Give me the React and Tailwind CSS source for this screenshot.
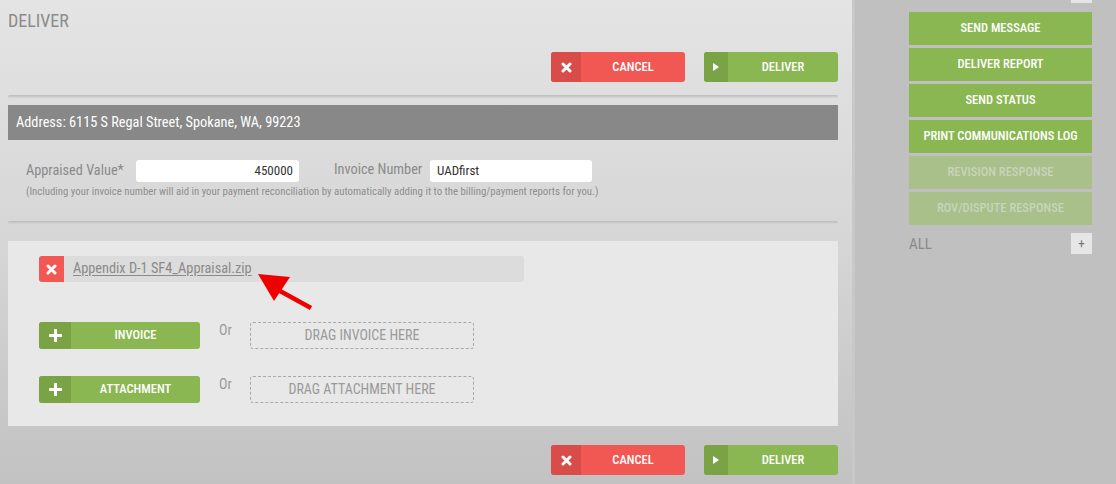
import React from 'react';

const font = { fontFamily: '"Roboto Condensed", "Liberation Sans Narrow", "DejaVu Sans Condensed", Roboto, sans-serif' };

const XIcon = () => (
  <svg width="11" height="11" viewBox="0 0 11 11">
    <path d="M2 2 L9 9 M9 2 L2 9" stroke="#fff" strokeWidth="3" strokeLinecap="round" />
  </svg>
);

const PlayIcon = () => (
  <svg width="6" height="8" viewBox="0 0 6 8">
    <path d="M0 0 L6 4 L0 8 Z" fill="#fff" />
  </svg>
);

const PlusIcon = () => (
  <svg width="13" height="13" viewBox="0 0 13 13">
    <path d="M6.5 1 V12 M1 6.5 H12" stroke="#fff" strokeWidth="3" strokeLinecap="round" />
  </svg>
);

const CancelBtn = () => (
  <div className="flex w-[134px] h-[30px] rounded-[3px] overflow-hidden bg-[#f15753]">
    <div className="w-[30px] flex items-center justify-center bg-[#d84c49]">
      <XIcon />
    </div>
    <div className="flex-1 flex items-center justify-center text-white text-[12.5px] font-medium">CANCEL</div>
  </div>
);

const DeliverBtn = () => (
  <div className="flex w-[134px] h-[30px] rounded-[3px] overflow-hidden bg-[#8ab752]">
    <div className="w-[24px] flex items-center justify-center bg-[#7aa346]">
      <PlayIcon />
    </div>
    <div className="flex-1 flex items-center justify-center text-white text-[12.5px] font-medium">DELIVER</div>
  </div>
);

const AddBtn = ({ label }) => (
  <div className="flex w-[161px] h-[27px] rounded-[3px] overflow-hidden bg-[#8ab752]">
    <div className="w-[32px] flex items-center justify-center bg-[#7aa346]">
      <PlusIcon />
    </div>
    <div className="flex-1 flex items-center justify-center text-white text-[12.5px] font-medium">{label}</div>
  </div>
);

const Separator = () => (
  <div className="h-[3px] rounded-full bg-gradient-to-b from-[#b4b4b4] to-[#d6d6d6] opacity-80" />
);

const sideItems = [
  { label: 'SEND MESSAGE', on: true },
  { label: 'DELIVER REPORT', on: true },
  { label: 'SEND STATUS', on: true },
  { label: 'PRINT COMMUNICATIONS LOG', on: true },
  { label: 'REVISION RESPONSE', on: false },
  { label: 'ROV/DISPUTE RESPONSE', on: false },
];

export default function App() {
  return (
    <div className="relative flex w-[1116px] h-[484px] overflow-hidden bg-[#c0c0c0]" style={font}>
      <main className="w-[855px] shrink-0 pl-2 pr-[14px] pt-[10px] bg-gradient-to-b from-[#e4e4e4] via-[#d6d6d6] to-[#c2c2c2] border-r-[3px] border-[#c8c8c8]">
        <h1 className="text-[18px] leading-[22px] text-[#8b8b8b]">DELIVER</h1>

        <div className="flex justify-end gap-[19px] mt-[20px]">
          <CancelBtn />
          <DeliverBtn />
        </div>

        <div className="mt-[13px]">
          <Separator />
        </div>

        <div className="mt-[7px] h-[35px] bg-[#888888] flex items-center pl-2 text-white text-[14.3px]">
          Address: 6115 S Regal Street, Spokane, WA, 99223
        </div>

        <div className="pl-[18px] mt-[20px] flex items-center">
          <span className="text-[14.3px] text-[#8a8a8a] w-[110px]">Appraised Value*</span>
          <div className="w-[163px] h-[22px] bg-white rounded-[3px] flex items-center justify-end pr-[6px] text-[13px] text-[#333]">450000</div>
          <span className="text-[14.3px] text-[#8a8a8a] ml-[35px] w-[96px] -mt-[2px]">Invoice Number</span>
          <div className="w-[162px] h-[22px] bg-white rounded-[3px] flex items-center pl-[7px] text-[13px] text-[#333]">UADfirst</div>
        </div>
        <p className="pl-[18px] mt-[3px] text-[10.8px] leading-[14px] text-[#8e8e8e]">
          (Including your invoice number will aid in your payment reconciliation by automatically adding it to the billing/payment reports for you.)
        </p>

        <div className="mt-[22px]">
          <Separator />
        </div>

        <div className="mt-[17px] h-[185px] bg-[#e8e8e8] pl-[31px] pt-[15px]">
          <div className="flex items-center w-[485px] h-[26px] rounded-[3px] bg-[#dcdcdc] overflow-hidden">
            <div className="w-[25px] h-full flex items-center justify-center bg-[#f15753]">
              <XIcon />
            </div>
            <span className="ml-[9px] text-[14.3px] text-[#8a8a8a] underline underline-offset-2">Appendix D-1 SF4_Appraisal.zip</span>
          </div>

          <div className="flex items-center mt-[40px]">
            <AddBtn label="INVOICE" />
            <span className="ml-[19px] w-[31px] text-[14px] text-[#9a9a9a] -mt-[10px]">Or</span>
            <div className="w-[224px] h-[27px] rounded-[3px] border border-dashed border-[#a8a8a8] flex items-center justify-center text-[14px] text-[#9a9a9a]">DRAG INVOICE HERE</div>
          </div>

          <div className="flex items-center mt-[27px]">
            <AddBtn label="ATTACHMENT" />
            <span className="ml-[19px] w-[31px] text-[14px] text-[#9a9a9a] -mt-[10px]">Or</span>
            <div className="w-[224px] h-[27px] rounded-[3px] border border-dashed border-[#a8a8a8] flex items-center justify-center text-[14px] text-[#9a9a9a]">DRAG ATTACHMENT HERE</div>
          </div>
        </div>

        <div className="flex justify-end gap-[19px] mt-[19px]">
          <CancelBtn />
          <DeliverBtn />
        </div>
      </main>

      <aside className="flex-1 pl-[54px] pr-[24px]">
        <div className="flex justify-end">
          <div className="w-[21px] h-[3px] bg-[#e6e6e6]" />
        </div>
        <div className="flex flex-col gap-[3px] mt-[9px]">
          {sideItems.map((it) => (
            <div
              key={it.label}
              className={
                it.on
                  ? 'h-[33px] flex items-center justify-center bg-[#8ab752] text-white text-[12.5px] font-medium'
                  : 'h-[33px] flex items-center justify-center bg-[#a9c08b] text-[#c8d4ba] text-[12.5px] font-medium'
              }
            >
              {it.label}
            </div>
          ))}
        </div>
        <div className="flex items-center justify-between mt-[7px]">
          <span className="text-[15px] text-[#8a8a8a] mt-[1px]">ALL</span>
          <div className="w-[21px] h-[21px] bg-[#e6e6e6] flex items-center justify-center text-[13px] text-[#777]">+</div>
        </div>
      </aside>

      <svg className="absolute left-[250px] top-[269px]" width="70" height="45" viewBox="0 0 70 45">
        <path d="M30 22 L61 39" stroke="#ee0000" strokeWidth="4.5" strokeLinecap="butt" />
        <path d="M8 5 L40 8 L24 32 Z" fill="#ee0000" />
      </svg>
    </div>
  );
}
